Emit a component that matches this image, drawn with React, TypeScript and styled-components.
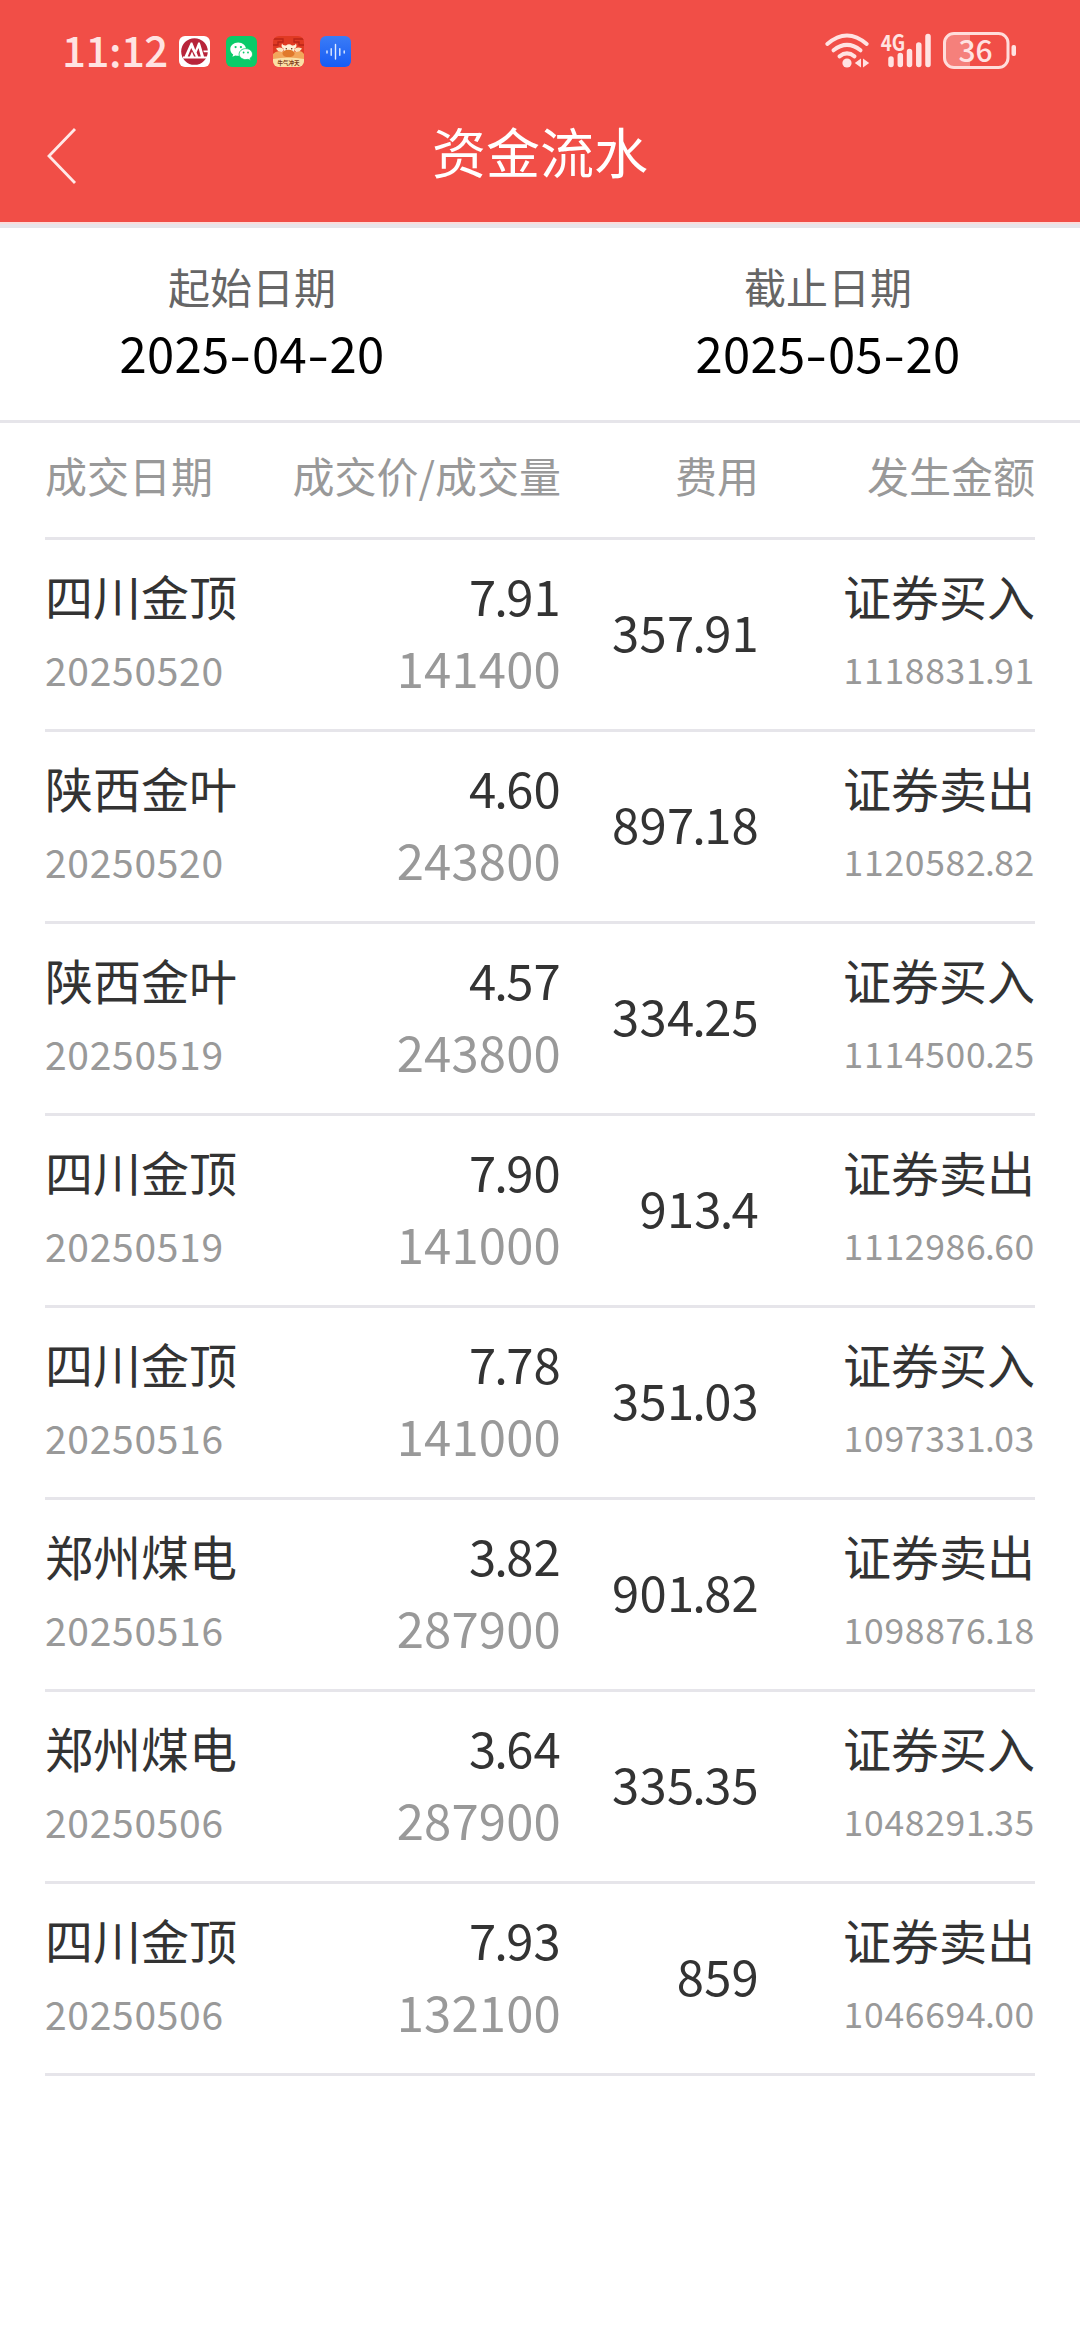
import React from "react";
import styled, { createGlobalStyle } from "styled-components";

const GlobalStyle = createGlobalStyle`
  html, body {
    margin: 0;
    padding: 0;
    background: #ffffff;
  }
  * { box-sizing: border-box; }
`;

const Screen = styled.main`
  width: 1080px;
  height: 2340px;
  background: #ffffff;
  overflow: hidden;
  font-family: "Noto Sans CJK SC", "Noto Sans", sans-serif;
  font-weight: 400;
`;

const Header = styled.header`
  height: 228px;
  background: #f14e47;
  border-bottom: 4px solid #e6e5ea;
  box-shadow: inset 0 -2px 0 #fbdcdb;
`;

const StatusBar = styled.div`
  height: 102px;
  padding: 0 64px 0 62px;
  display: flex;
  align-items: center;
  justify-content: space-between;
`;

const StatusGroup = styled.div<{ $gap: number }>`
  display: flex;
  align-items: center;
  gap: ${(p) => p.$gap}px;
`;

const Clock = styled.time`
  width: 101px;
  height: 66px;
  line-height: 62px;
  font-size: 42px;
  font-weight: 500;
  letter-spacing: -0.5px;
  color: #ffe3e2;
`;

const AppIcon = styled.svg`
  display: block;
  width: 31px;
  height: 31px;
`;

const StatusIcon = styled.svg`
  display: block;
  height: 64px;
  overflow: visible;
`;

const TitleBar = styled.div`
  height: 108px;
  display: grid;
  grid-template-columns: 120px 1fr 120px;
  align-items: center;
`;

const BackButton = styled.button`
  width: 120px;
  height: 108px;
  padding: 0 0 0 45px;
  border: 0;
  background: none;
  display: flex;
  align-items: center;
`;

const Title = styled.h1`
  margin: 0;
  padding-bottom: 11px;
  font-size: 54px;
  line-height: 96px;
  font-weight: 400;
  text-align: center;
  color: #ffffff;
`;

const DateRange = styled.section`
  height: 195px;
  padding-top: 24px;
  display: flex;
  justify-content: space-between;
  border-bottom: 3px solid #e6e5ea;
`;

const DateField = styled.div`
  width: 504px;
  display: flex;
  flex-direction: column;
  align-items: center;
`;

const DateLabel = styled.span`
  font-size: 42px;
  line-height: 68px;
  color: #666666;
`;

const DateValue = styled.span`
  display: flex;
  font-size: 49px;
  line-height: 64px;
  letter-spacing: 0.3px;
  color: #000000;
`;

const Dash = styled.span`
  width: 22.5px;
  text-align: center;
  transform: scaleX(1.28);
`;

const Table = styled.section`
  padding: 0 45px;
`;

const columns = `
  display: grid;
  grid-template-columns: 230px 286px 198px 276px;
  border-bottom: 3px solid #e6e5ea;
`;

const TableHead = styled.div`
  ${columns}
  height: 117px;
  padding-top: 17px;
  font-size: 42px;
  line-height: 70px;
  color: #999999;
`;

const HeadCell = styled.span<{ $align?: string }>`
  text-align: ${(p) => p.$align ?? "right"};
  white-space: nowrap;
`;

const Row = styled.article`
  ${columns}
  height: 192px;
  padding: 19px 0 26px;
  align-items: center;
`;

const Cell = styled.div<{ $align?: string }>`
  display: flex;
  flex-direction: column;
  text-align: ${(p) => p.$align ?? "right"};
  white-space: nowrap;
`;

const Name = styled.span`
  font-size: 48px;
  line-height: 72px;
  color: #333333;
`;

const Figure = styled.span<{ $muted?: boolean }>`
  font-size: 49px;
  line-height: 72px;
  letter-spacing: 0.2px;
  color: ${(p) => (p.$muted ? "#999999" : "#333333")};
`;

const Point = styled.span`
  margin: 0 -0.04em;
`;

const TradeDate = styled.span`
  font-size: 39px;
  line-height: 72px;
  padding-top: 2px;
  margin-bottom: -2px;
  letter-spacing: 0.7px;
  color: #999999;
`;

const Amount = styled.span`
  font-size: 35.5px;
  line-height: 72px;
  padding-top: 2px;
  margin-bottom: -2px;
  letter-spacing: 0.7px;
  color: #999999;
`;

const records = [
  ["四川金顶", "20250520", "7.91", "141400", "357.91", "证券买入", "1118831.91"],
  ["陕西金叶", "20250520", "4.60", "243800", "897.18", "证券卖出", "1120582.82"],
  ["陕西金叶", "20250519", "4.57", "243800", "334.25", "证券买入", "1114500.25"],
  ["四川金顶", "20250519", "7.90", "141000", "913.4", "证券卖出", "1112986.60"],
  ["四川金顶", "20250516", "7.78", "141000", "351.03", "证券买入", "1097331.03"],
  ["郑州煤电", "20250516", "3.82", "287900", "901.82", "证券卖出", "1098876.18"],
  ["郑州煤电", "20250506", "3.64", "287900", "335.35", "证券买入", "1048291.35"],
  ["四川金顶", "20250506", "7.93", "132100", "859", "证券卖出", "1046694.00"],
];

const BankIcon = () => (
  <AppIcon viewBox="0 0 31 31">
    <rect width="31" height="31" rx="6" fill="#fff" />
    <circle cx="15.5" cy="15.5" r="13.3" fill="#b8243a" />
    <path d="M5.500 20.500L11.800 6.500H13.300L16.300 14L19.200 6.500H20.800L25 20.500H29.500V22.500H4V20.500Z" fill="#fff" />
    <path d="M12.200 12L8.700 20.500H10.800L13 15.500L15 20.500H16.800ZM19.500 12L17.600 16.500L19.200 20.500H21.800Z" fill="#b8243a" />
    <path d="M24.300 14.500H31V16.300H24.800Z" fill="#fff" />
  </AppIcon>
);

const ChatIcon = () => (
  <AppIcon viewBox="0 0 31 31">
    <rect width="31" height="31" rx="6" fill="#0acb69" />
    <path d="M12.2 6.5c-4.500 0-7.900 3-7.900 6.700 0 2.200 1.100 4 2.900 5.200l-.8 2.400 2.900-1.400c.9.300 1.900.4 2.900.4 4.400 0 7.900-3 7.900-6.600s-3.500-6.700-7.900-6.700Z" fill="#fff" />
    <path d="M19.800 12.600c-3.800 0-6.700 2.500-6.700 5.500s2.900 5.500 6.700 5.500c.8 0 1.600-.1 2.300-.3l2.500 1.200-.6-2.100c1.600-1 2.500-2.600 2.500-4.300 0-3-2.900-5.500-6.700-5.500Z" fill="#fff" stroke="#0acb69" strokeWidth=".8" />
    <g fill="#0acb69">
      <circle cx="9.600" cy="11.100" r="1.100" />
      <circle cx="14.900" cy="11.100" r="1.100" />
      <circle cx="17.600" cy="16.500" r=".9" />
      <circle cx="22" cy="16.500" r=".9" />
    </g>
  </AppIcon>
);

const CaptionText = styled.text`
  font: 700 5.5px "Noto Sans CJK SC", sans-serif;
  fill: #7d3a17;
`;

const BullIcon = () => (
  <AppIcon viewBox="0 0 31 31">
    <defs>
      <clipPath id="bullFrame"><rect width="31" height="31" rx="6" /></clipPath>
    </defs>
    <g clipPath="url(#bullFrame)">
      <rect width="31" height="31" fill="#e03a23" />
      <path d="M0 3H10V6H5V9H0M31 3H21V6H26V9H31" fill="none" stroke="#b92519" strokeWidth="1.300" />
      <path d="M0 18Q4 14 8 16Q15 12 23 16Q28 13 31 18V31H0Z" fill="#f2a75c" />
      <path d="M9 7.500Q10 10 13 9.500Q16 7 19 9.500Q22 10 23 7.500Q24.500 11 21.500 12.500L21 17H11L10.500 12.500Q7.500 11 9 7.500Z" fill="#fff0d6" />
      <path d="M3 12.500Q8 10 11 13.500L9 16Q5 16 3 12.500ZM29 12.500Q24 10 21 13.500L23 16Q27 16 29 12.500Z" fill="#fde3bd" />
      <ellipse cx="15.500" cy="17.500" rx="6" ry="3.800" fill="#e0792b" />
      <circle cx="13.300" cy="12.800" r=".8" fill="#6b2a12" />
      <circle cx="18.700" cy="12.800" r=".8" fill="#6b2a12" />
      <path d="M0 23Q15 20 31 23V31H0Z" fill="#fbe0a6" />
    </g>
    <CaptionText x="4.500" y="29.300">牛气冲天</CaptionText>
  </AppIcon>
);

const VoiceIcon = () => (
  <AppIcon viewBox="0 0 31 31">
    <defs>
      <linearGradient id="voiceBlue" x1="0" y1="0" x2="0" y2="1">
        <stop offset="0" stopColor="#3b7cf6" />
        <stop offset="1" stopColor="#165cf5" />
      </linearGradient>
    </defs>
    <rect width="31" height="31" rx="6" fill="url(#voiceBlue)" />
    <path d="M7 15V17M11.200 12.800V19.200M15.500 8.500V23M19.800 12.800V19.200M24.200 15V17" stroke="#e2ecff" strokeWidth="1.400" strokeLinecap="round" />
  </AppIcon>
);

const BadgeText = styled.text<{ $size: number; $weight: number }>`
  font-family: "Noto Sans CJK SC", sans-serif;
  font-size: ${(p) => p.$size}px;
  font-weight: ${(p) => p.$weight};
  fill: #ffe3e2;
`;

const WifiIcon = () => (
  <StatusIcon width="46" viewBox="823 19 46 64">
    <g fill="none" stroke="#ffe3e2" strokeWidth="4" strokeLinecap="round">
      <path d="M826.300 44Q846 27 865.700 44" />
      <path d="M832.500 50.300Q846 39.500 859.500 50.300" />
      <path d="M838.500 56.300Q846 50.500 853.500 56.300" />
    </g>
    <circle cx="846" cy="63" r="4.600" fill="#ffe3e2" />
    <path d="M860 58.500V67.500L853.800 63ZM862 58.500V67.500L868.200 63Z" fill="#ffe3e2" />
  </StatusIcon>
);

const SignalIcon = () => (
  <StatusIcon width="52" viewBox="879 19 52 64">
    <path d="M890 59V64.500M899.300 55.500V64.500M908.500 51.500V64.500M917.800 45V64.500M927 36.500V64.500" stroke="#ffe3e2" strokeWidth="5.500" strokeLinecap="round" />
    <BadgeText x="879.800" y="50.500" $size={22} $weight={700} textLength="24.500" lengthAdjust="spacingAndGlyphs">4G</BadgeText>
  </StatusIcon>
);

const BatteryIcon = () => (
  <StatusIcon width="74" viewBox="941 19 74 64">
    <path d="M969 33.500H954Q943.500 33.500 943.500 43V58Q943.500 67.500 954 67.500H969Z" fill="#f5807b" />
    <rect x="943.500" y="33.500" width="63.500" height="34" rx="9.500" fill="none" stroke="#ffdddb" strokeWidth="3" />
    <rect x="1010.500" y="45" width="4.500" height="11" rx="2" fill="#ffe3e2" />
    <BadgeText x="974.500" y="61.500" $size={30} $weight={500} textAnchor="middle">36</BadgeText>
  </StatusIcon>
);

const DateText = ({ value }: { value: string }) => {
  const parts = value.split("-");
  return (
    <DateValue>
      {parts.map((part, i) => (
        <React.Fragment key={i}>
          {i > 0 && <Dash>-</Dash>}
          <span>{part}</span>
        </React.Fragment>
      ))}
    </DateValue>
  );
};

const Decimal = ({ value }: { value: string }) => {
  const [whole, fraction] = value.split(".");
  return (
    <>
      {whole}
      {fraction && <Point>.</Point>}
      {fraction}
    </>
  );
};

export default function App() {
  return (
    <Screen>
      <GlobalStyle />
      <Header>
        <StatusBar>
          <StatusGroup $gap={16}>
            <Clock>11:12</Clock>
            <BankIcon />
            <ChatIcon />
            <BullIcon />
            <VoiceIcon />
          </StatusGroup>
          <StatusGroup $gap={10}>
            <WifiIcon />
            <SignalIcon />
            <BatteryIcon />
          </StatusGroup>
        </StatusBar>
        <TitleBar>
          <BackButton aria-label="返回">
            <svg width="32" height="58" viewBox="45 127 32 58">
              <path d="M75 129L49 156L75 183" fill="none" stroke="#ffe9e8" strokeWidth="2.800" />
            </svg>
          </BackButton>
          <Title>资金流水</Title>
        </TitleBar>
      </Header>
      <DateRange>
        <DateField>
          <DateLabel>起始日期</DateLabel>
          <DateText value="2025-04-20" />
        </DateField>
        <DateField>
          <DateLabel>截止日期</DateLabel>
          <DateText value="2025-05-20" />
        </DateField>
      </DateRange>
      <Table>
        <TableHead>
          <HeadCell $align="left">成交日期</HeadCell>
          <HeadCell>成交价/成交量</HeadCell>
          <HeadCell>费用</HeadCell>
          <HeadCell>发生金额</HeadCell>
        </TableHead>
        {records.map(([name, date, price, volume, fee, kind, amount], i) => (
          <Row key={i}>
            <Cell $align="left">
              <Name>{name}</Name>
              <TradeDate>{date}</TradeDate>
            </Cell>
            <Cell>
              <Figure><Decimal value={price} /></Figure>
              <Figure $muted>{volume}</Figure>
            </Cell>
            <Cell>
              <Figure><Decimal value={fee} /></Figure>
            </Cell>
            <Cell>
              <Name>{kind}</Name>
              <Amount><Decimal value={amount} /></Amount>
            </Cell>
          </Row>
        ))}
      </Table>
    </Screen>
  );
}
